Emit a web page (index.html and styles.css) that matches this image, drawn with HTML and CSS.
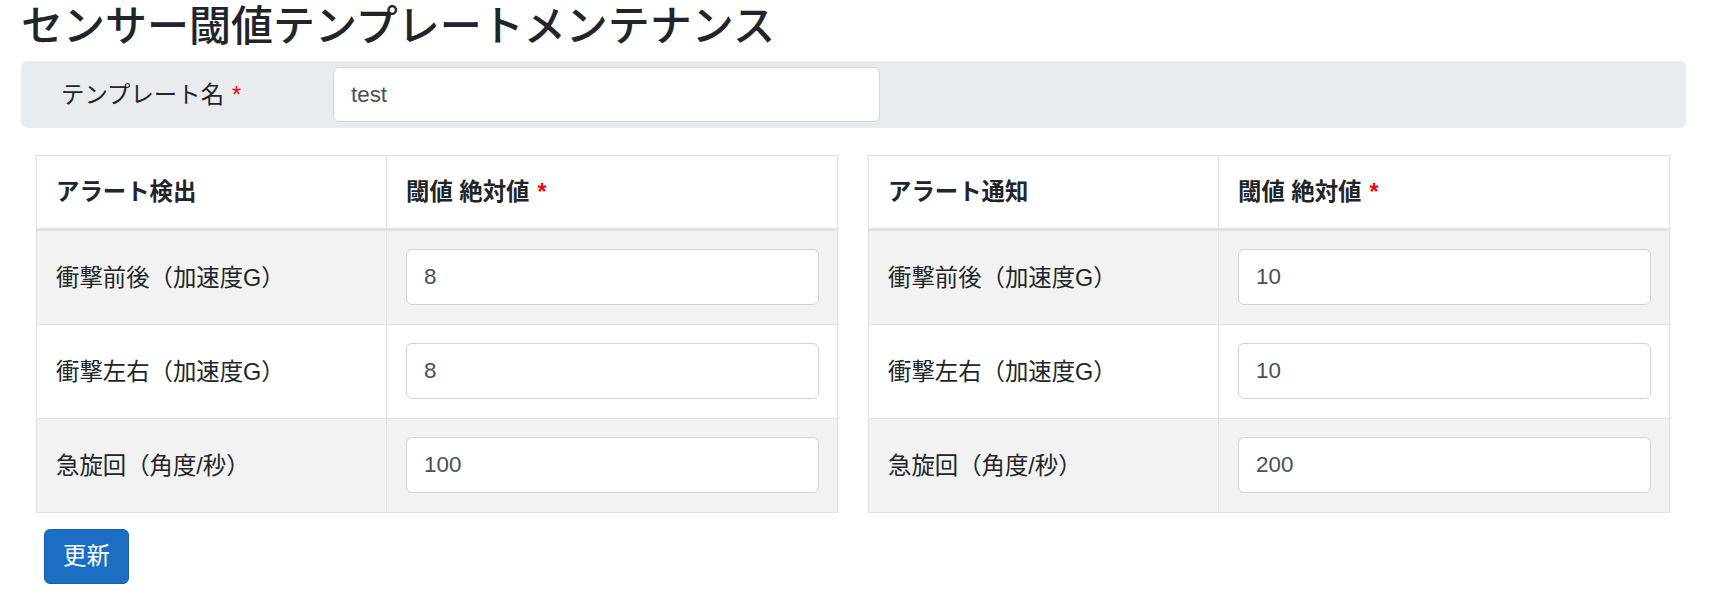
FILE: index.html
```html
<!DOCTYPE html>
<html lang="ja">
<head>
<meta charset="utf-8">
<title>センサー閾値テンプレートメンテナンス</title>
<link rel="stylesheet" href="styles.css">
</head>
<body>
<div class="page">
  <h1 class="title">センサー閾値テンプレートメンテナンス</h1>

  <div class="name-bar">
    <label class="name-label" for="tplname">テンプレート名<span class="req">*</span></label>
    <input id="tplname" class="form-input" type="text" value="test">
  </div>

  <div class="tables">
    <table class="thr-table">
      <colgroup><col class="c1"><col></colgroup>
      <thead>
        <tr><th>アラート検出</th><th>閾値 絶対値<span class="req">*</span></th></tr>
      </thead>
      <tbody>
        <tr><td>衝撃前後（加速度G）</td><td><input class="form-input" type="text" value="8"></td></tr>
        <tr><td>衝撃左右（加速度G）</td><td><input class="form-input" type="text" value="8"></td></tr>
        <tr><td>急旋回（角度/秒）</td><td><input class="form-input" type="text" value="100"></td></tr>
      </tbody>
    </table>

    <table class="thr-table">
      <colgroup><col class="c1"><col></colgroup>
      <thead>
        <tr><th>アラート通知</th><th>閾値 絶対値<span class="req">*</span></th></tr>
      </thead>
      <tbody>
        <tr><td>衝撃前後（加速度G）</td><td><input class="form-input" type="text" value="10"></td></tr>
        <tr><td>衝撃左右（加速度G）</td><td><input class="form-input" type="text" value="10"></td></tr>
        <tr><td>急旋回（角度/秒）</td><td><input class="form-input" type="text" value="200"></td></tr>
      </tbody>
    </table>
  </div>

  <button class="btn-update" type="button">更新</button>
</div>
</body>
</html>
```

FILE: styles.css
```css
* { box-sizing: border-box; }

html, body {
  margin: 0;
  padding: 0;
  background: #fff;
}

body {
  font-family: "Liberation Sans", "Noto Sans CJK JP", sans-serif;
  font-size: 23.4px;
  color: #212529;
}

.page {
  padding: 0 29px 0 21px;
}

.title {
  margin: 0 0 9px 0;
  padding-top: 2px;
  font-size: 42px;
  line-height: 50px;
  font-weight: 500;
  color: #212529;
}

.name-bar {
  display: grid;
  grid-template-columns: 272px 547px;
  align-items: center;
  background: #e9ecef;
  border-radius: 6px;
  padding: 6px 0 6px 40px;
  height: 67px;
}

.name-label {
  line-height: 34px;
  color: #212529;
}

.req {
  color: #ff0000;
  margin-left: 8px;
  font-family: "Liberation Sans", sans-serif;
}

.form-input {
  display: block;
  width: 100%;
  height: 55px;
  padding: 0 17px;
  border: 1px solid #ced4da;
  border-radius: 6px;
  background: #fff;
  font-family: "Liberation Sans", "Noto Sans CJK JP", sans-serif;
  font-size: 22.4px;
  color: #495057;
  outline: none;
}

.thr-table .form-input {
  height: 56px;
}

.tables {
  display: grid;
  grid-template-columns: 1fr 1fr;
  gap: 30px;
  padding: 0 16px 0 15px;
  margin-top: 27px;
}

.thr-table {
  width: 100%;
  border-collapse: collapse;
  table-layout: fixed;
  border: 1px solid #dee2e6;
}

.thr-table col.c1 {
  width: 43.7%;
}

.thr-table th {
  text-align: left;
  font-weight: 700;
  line-height: 34px;
  padding: 19px 18px 19px 19px;
  border: 1px solid #dee2e6;
  border-bottom: 3px solid #dee2e6;
  background: #fff;
}

.thr-table td {
  line-height: 34px;
  padding: 18px 18px 18px 19px;
  border: 1px solid #dee2e6;
  vertical-align: middle;
}

.thr-table td:last-child {
  padding: 18px 18px 19px 19px;
}

.thr-table tbody tr:nth-child(odd) td {
  background: #f2f2f2;
}

.btn-update {
  display: block;
  margin: 16px 0 0 23px;
  width: 85px;
  height: 55px;
  border: 1px solid #1861ac;
  border-radius: 6px;
  background: #1b6ec2;
  color: #fff;
  font-family: "Liberation Sans", "Noto Sans CJK JP", sans-serif;
  font-size: 23.4px;
  line-height: 1;
  padding: 0;
  cursor: pointer;
}
```
